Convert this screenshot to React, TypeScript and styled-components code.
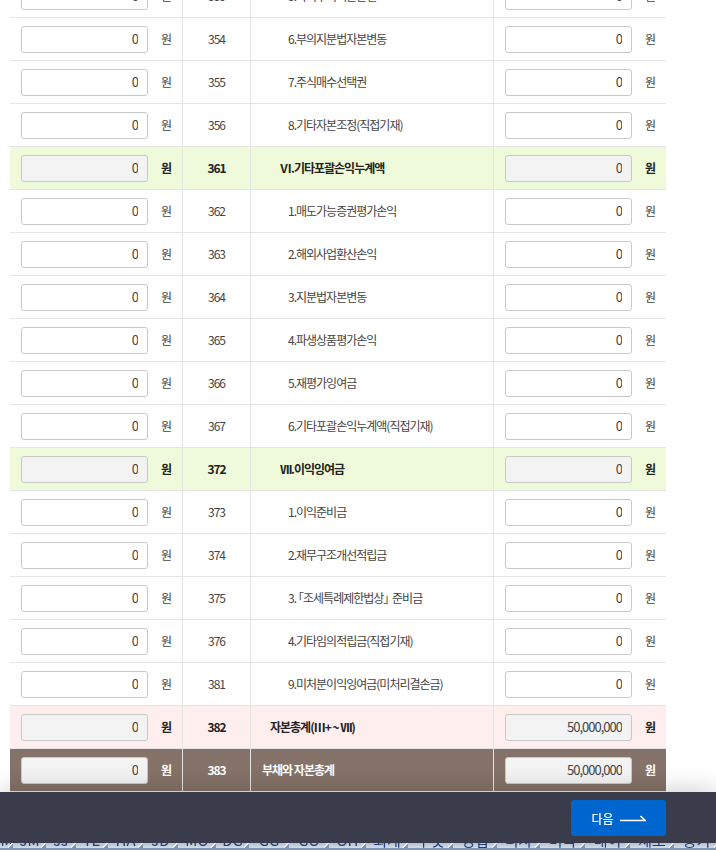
import React from "react";
import styled, { createGlobalStyle } from "styled-components";

const Global = createGlobalStyle`
  html, body { margin: 0; padding: 0; height: 100%; overflow: hidden; background: #fff; }
  body { font-family: "Noto Sans CJK KR", "Noto Sans", sans-serif; }
`;

type Kind = "plain" | "group" | "total" | "grand";

const bg: Record<Kind, string> = { plain: "#fff", group: "#eefad9", total: "#ffeeee", grand: "#857268" };
const fg: Record<Kind, string> = { plain: "#444", group: "#222", total: "#222", grand: "#fff" };

const Page = styled.main`
  margin: -25px 0 0 10px;
  width: 656px;
`;

const Table = styled.table`
  width: 656px;
  border-collapse: separate;
  border-spacing: 0;
  table-layout: fixed;
`;

const Row = styled.tr<{ $kind: Kind }>`
  height: 43px;
  background: ${(p) => bg[p.$kind]};
  color: ${(p) => fg[p.$kind]};
  font-size: 12px;
  letter-spacing: -1px;
  font-weight: ${(p) => (p.$kind === "plain" ? 400 : 700)};
`;

const Cell = styled.td<{ $last?: boolean }>`
  box-sizing: border-box;
  height: 43px;
  padding: 0;
  border-bottom: 1px solid #e5e5e5;
  border-right: ${(p) => (p.$last ? "0" : "1px solid #e5e5e5")};
`;

const Code = styled.div`
  padding-bottom: 2px;
  text-align: center;
`;

const AmountWrap = styled.div`
  display: flex;
  align-items: center;
  padding-left: 11px;
`;

const Amount = styled.input<{ $kind: Kind }>`
  box-sizing: border-box;
  width: 127px;
  height: 27px;
  padding: 0 9px 1px 4px;
  border: 1px solid #c9c9c9;
  border-radius: 3px;
  background: ${(p) => (p.$kind === "plain" ? "#fff" : "#f3f3f3")};
  color: #444;
  font: 400 13px "Noto Sans CJK KR", "Noto Sans", sans-serif;
  letter-spacing: -1px;
  text-align: right;
  outline: none;
`;

const Unit = styled.span`
  margin-left: 13px;
  padding-bottom: 2px;
`;

const Label = styled.div<{ $indent: number }>`
  padding: 0 0 2px ${(p) => p.$indent}px;
  white-space: nowrap;
  font-feature-settings: "halt";
`;

const Bracket = styled.span<{ $open?: boolean }>`
  margin: ${(p) => (p.$open ? "0 0 0 2px" : "0 2px 0 0")};
`;

const Dock = styled.footer`
  position: fixed;
  left: 0;
  right: 0;
  bottom: 0;
  z-index: 2;
`;

const Bar = styled.div`
  box-sizing: border-box;
  height: 51px;
  padding: 8px 50px 0 0;
  display: flex;
  justify-content: flex-end;
  align-items: flex-start;
  background: #3a3b4b;
  box-shadow: 0 -4px 22px rgba(0, 0, 0, 0.16);
`;

const NextButton = styled.button`
  width: 95px;
  height: 36px;
  display: flex;
  align-items: center;
  justify-content: center;
  gap: 6px;
  padding: 0;
  border: 0;
  border-radius: 3px;
  background: #0066cf;
  color: #fff;
  font: 500 12px "Noto Sans CJK KR", "Noto Sans", sans-serif;
`;

const Tabs = styled.nav`
  height: 7px;
  overflow: hidden;
  display: flex;
  background: #8295b2;
`;

const Tab = styled.span<{ $width: number }>`
  position: relative;
  box-sizing: border-box;
  flex: 0 0 ${(p) => p.$width}px;
  height: 5px;
  overflow: hidden;
  display: flex;
  justify-content: center;
  align-items: flex-end;
  background: linear-gradient(#b3bfd0, #d6dce6);
  color: #1d3f80;
  font: 400 15px/15px "Noto Sans CJK KR", "Noto Sans", sans-serif;
  white-space: nowrap;

  &::after {
    content: "";
    position: absolute;
    right: 0;
    bottom: 0;
    width: 5px;
    height: 5px;
    background: linear-gradient(
      to bottom right,
      transparent 38%,
      #eef1f5 38%,
      #eef1f5 58%,
      #8295b2 58%
    );
  }
`;

const TabText = styled.span`
  flex: none;
  margin-bottom: 1px;
`;

interface Item { a: string; code: number; label: React.ReactNode; b: string; kind: Kind; indent: number }

const p = (code: number, label: React.ReactNode): Item => ({ a: "0", code, label, b: "0", kind: "plain", indent: 37 });

const items: Item[] = [
  p(353, "5.자기주식처분손실"),
  p(354, "6.부의지분법자본변동"),
  p(355, "7.주식매수선택권"),
  p(356, "8.기타자본조정(직접기재)"),
  { a: "0", code: 361, label: "Ⅵ.기타포괄손익누계액", b: "0", kind: "group", indent: 29 },
  p(362, "1.매도가능증권평가손익"),
  p(363, "2.해외사업환산손익"),
  p(364, "3.지분법자본변동"),
  p(365, "4.파생상품평가손익"),
  p(366, "5.재평가잉여금"),
  p(367, "6.기타포괄손익누계액(직접기재)"),
  { a: "0", code: 372, label: "Ⅶ.이익잉여금", b: "0", kind: "group", indent: 29 },
  p(373, "1.이익준비금"),
  p(374, "2.재무구조개선적립금"),
  p(375, <>3.<Bracket $open>「</Bracket>조세특례제한법상<Bracket>」</Bracket> 준비금</>),
  p(376, "4.기타임의적립금(직접기재)"),
  p(381, "9.미처분이익잉여금(미처리결손금)"),
  { a: "0", code: 382, label: "자본총계(Ⅲ+ ~ Ⅶ)", b: "50,000,000", kind: "total", indent: 19 },
  { a: "0", code: 383, label: "부채와 자본총계", b: "50,000,000", kind: "grand", indent: 11 },
];

const tabs: [string, number][] = [
  ["M", 13], ["JM", 33], ["JJ", 30], ["YE", 32], ["HA", 35], ["JD", 35], ["MO", 38], ["DG", 33],
  ["GG", 40], ["GO", 40], ["OH", 37], ["회계", 42], ["무엇", 45], ["영업", 44], ["디자", 43], ["미국", 45], ["대이", 45], ["제도", 44], ["중기", 45],
];

function AmountCell({ value, kind }: { value: string; kind: Kind }) {
  return (
    <AmountWrap>
      <Amount $kind={kind} value={value} readOnly />
      <Unit>원</Unit>
    </AmountWrap>
  );
}

export default function App() {
  return (
    <>
      <Global />
      <Page>
        <Table>
          <colgroup>
            <col style={{ width: 173 }} />
            <col style={{ width: 68 }} />
            <col style={{ width: 243 }} />
            <col style={{ width: 172 }} />
          </colgroup>
          <tbody>
            {items.map((it) => (
              <Row key={it.code} $kind={it.kind}>
                <Cell><AmountCell value={it.a} kind={it.kind} /></Cell>
                <Cell><Code>{it.code}</Code></Cell>
                <Cell><Label $indent={it.indent}>{it.label}</Label></Cell>
                <Cell $last><AmountCell value={it.b} kind={it.kind} /></Cell>
              </Row>
            ))}
          </tbody>
        </Table>
      </Page>
      <Dock>
        <Bar>
          <NextButton>
            다음
            <svg width="26" height="8" viewBox="0 0 26 8" fill="none" stroke="#fff" strokeWidth="1.7">
              <path d="M0 6.5H25L20.5 2" />
            </svg>
          </NextButton>
        </Bar>
        <Tabs>
          {tabs.map(([t, w]) => (
            <Tab key={t} $width={w}><TabText>{t}</TabText></Tab>
          ))}
        </Tabs>
      </Dock>
    </>
  );
}
